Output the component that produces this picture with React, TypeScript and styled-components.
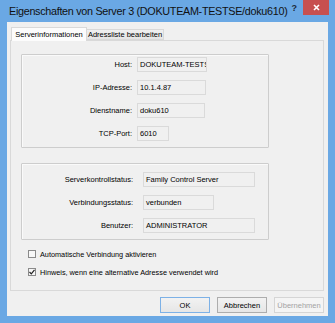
import React from 'react';
import styled, { createGlobalStyle } from 'styled-components';

const GlobalStyle = createGlobalStyle`
    html, body {
        margin: 0;
        padding: 0;
        background: #6aa8e4;
    }
    body {
        font-family: "Liberation Sans", Arial, sans-serif;
        font-size: 7.5px;
        color: #000;
    }
`;

const Window = styled.div`
    width: 335px;
    height: 323px;
    box-sizing: border-box;
    background: #6aa8e4;
    display: flex;
    flex-direction: column;
    padding: 0 7px 7px 7px;
`;

const TitleBar = styled.div`
    height: 22px;
    flex: none;
    display: flex;
    align-items: flex-start;
    margin-right: -2px;
    padding-left: 2px;
`;

const TitleText = styled.div`
    flex: 1;
    padding-top: 5px;
    font-size: 10.8px;
    letter-spacing: -0.3px;
    line-height: 13px;
    color: #111;
    white-space: nowrap;
`;

const HelpButton = styled.div`
    width: 16px;
    height: 15px;
    margin-right: 2px;
    display: flex;
    align-items: center;
    justify-content: center;
    font-size: 9px;
    font-weight: bold;
    color: #1c2a38;
`;

const CloseButton = styled.div`
    width: 30px;
    height: 15px;
    margin-right: 1px;
    background: #c75050;
    display: flex;
    align-items: center;
    justify-content: center;
`;

const Client = styled.div`
    flex: 1;
    background: #f0f0f0;
    display: flex;
    flex-direction: column;
    padding: 5px 4px 3px 3px;
    box-sizing: border-box;
`;

const TabStrip = styled.div`
    height: 13px;
    display: flex;
    align-items: flex-end;
    padding-left: 1px;
`;

const Tab = styled.div<{ $active?: boolean; $width: number }>`
    width: ${p => p.$width}px;
    height: ${p => (p.$active ? 14 : 11)}px;
    box-sizing: border-box;
    border: 1px solid #d9d9d9;
    border-bottom: ${p => (p.$active ? 'none' : '1px solid #d9d9d9')};
    background: ${p => (p.$active ? '#fcfcfc' : 'linear-gradient(#f0f0f0, #e5e5e5)')};
    margin-bottom: ${p => (p.$active ? -1 : 0)}px;
    ${p => (p.$active ? 'position: relative; z-index: 1;' : 'margin-left: -1px;')}
    display: flex;
    align-items: center;
    justify-content: center;
    white-space: nowrap;
    line-height: 10px;
`;

const Panel = styled.div`
    flex: 1;
    border: 1px solid #d9d9d9;
    background: #f0f0f0;
    padding: 13px 0 0 10px;
    display: flex;
    flex-direction: column;
`;

const GroupBox = styled.div<{ $padTop: number; $padBottom: number }>`
    width: 248px;
    box-sizing: border-box;
    border: 1px solid #cdcdcd;
    border-radius: 1px;
    box-shadow: inset 1px 1px 0 #fafafa;
    padding: ${p => p.$padTop}px 0 ${p => p.$padBottom}px 0;
    display: flex;
    flex-direction: column;
    gap: 8px;
    & + & {
        margin-top: 15px;
    }
`;

const Row = styled.div<{ $labelWidth: number; $gap: number }>`
    display: grid;
    grid-template-columns: ${p => p.$labelWidth}px auto;
    column-gap: ${p => p.$gap}px;
    align-items: center;
    height: 15px;
`;

const Label = styled.div`
    text-align: right;
    white-space: nowrap;
`;

const Field = styled.div<{ $width: number }>`
    width: ${p => p.$width}px;
    height: 15px;
    box-sizing: border-box;
    border: 1px solid #dadada;
    background: #f0f0f0;
    padding-left: 2px;
    line-height: 13px;
    white-space: nowrap;
    overflow: hidden;
`;

const CheckRow = styled.label<{ $top: number }>`
    display: flex;
    align-items: center;
    gap: 4px;
    margin: ${p => p.$top}px 0 0 7px;
    height: 10px;
    font-size: 7.3px;
    white-space: nowrap;
`;

const CheckBox = styled.span`
    width: 8px;
    height: 8px;
    box-sizing: border-box;
    border: 1px solid #8a8a8a;
    background: #f7f7f7;
    display: flex;
    align-items: center;
    justify-content: center;
`;

const ButtonBar = styled.div`
    display: flex;
    justify-content: flex-end;
    gap: 7px;
    margin-top: 6px;
`;

const Button = styled.div<{ $variant?: 'default' | 'disabled' }>`
    width: 50px;
    height: 16px;
    box-sizing: border-box;
    display: flex;
    align-items: center;
    justify-content: center;
    border: 1px solid
        ${p => (p.$variant === 'default' ? '#7db1e6' : p.$variant === 'disabled' ? '#d5d5d5' : '#adadad')};
    background: ${p => (p.$variant === 'disabled' ? '#f4f4f4' : 'linear-gradient(#f2f2f2, #e6e6e6)')};
    color: ${p => (p.$variant === 'disabled' ? '#a3a3a3' : '#000')};
`;

const serverRows = [
    { label: 'Host:', value: 'DOKUTEAM-TESTSE', width: 70 },
    { label: 'IP-Adresse:', value: '10.1.4.87', width: 69 },
    { label: 'Dienstname:', value: 'doku610', width: 68 },
    { label: 'TCP-Port:', value: '6010', width: 32 },
];

const statusRows = [
    { label: 'Serverkontrollstatus:', value: 'Family Control Server', width: 112 },
    { label: 'Verbindungsstatus:', value: 'verbunden', width: 71 },
    { label: 'Benutzer:', value: 'ADMINISTRATOR', width: 112 },
];

const Check = ({ checked }: { checked?: boolean }) => (
    <CheckBox>
        {checked && (
            <svg width="6" height="6" viewBox="0 0 6 6">
                <path d="M0.5 3 L2.3 4.8 L5.5 0.8" fill="none" stroke="#222" strokeWidth="1.2" />
            </svg>
        )}
    </CheckBox>
);

const App: React.FC = () => {
    return (
        <>
            <GlobalStyle />
            <Window>
                <TitleBar>
                    <TitleText>Eigenschaften von Server 3 (DOKUTEAM-TESTSE/doku610)</TitleText>
                    <HelpButton>?</HelpButton>
                    <CloseButton>
                        <svg width="7" height="7" viewBox="0 0 7 7">
                            <path d="M1 1 L6 6 M6 1 L1 6" stroke="#fff" strokeWidth="1.6" />
                        </svg>
                    </CloseButton>
                </TitleBar>
                <Client>
                    <TabStrip>
                        <Tab $active $width={76}>Serverinformationen</Tab>
                        <Tab $width={78}>Adressliste bearbeiten</Tab>
                    </TabStrip>
                    <Panel>
                        <GroupBox $padTop={2} $padBottom={6}>
                            {serverRows.map(r => (
                                <Row key={r.label} $labelWidth={110} $gap={5}>
                                    <Label>{r.label}</Label>
                                    <Field $width={r.width}>{r.value}</Field>
                                </Row>
                            ))}
                        </GroupBox>
                        <GroupBox $padTop={8} $padBottom={6}>
                            {statusRows.map(r => (
                                <Row key={r.label} $labelWidth={111} $gap={10}>
                                    <Label>{r.label}</Label>
                                    <Field $width={r.width}>{r.value}</Field>
                                </Row>
                            ))}
                        </GroupBox>
                        <CheckRow $top={9}>
                            <Check />
                            Automatische Verbindung aktivieren
                        </CheckRow>
                        <CheckRow $top={8}>
                            <Check checked />
                            Hinweis, wenn eine alternative Adresse verwendet wird
                        </CheckRow>
                    </Panel>
                    <ButtonBar>
                        <Button $variant="default">OK</Button>
                        <Button>Abbrechen</Button>
                        <Button $variant="disabled">Übernehmen</Button>
                    </ButtonBar>
                </Client>
            </Window>
        </>
    );
};

export default App;
